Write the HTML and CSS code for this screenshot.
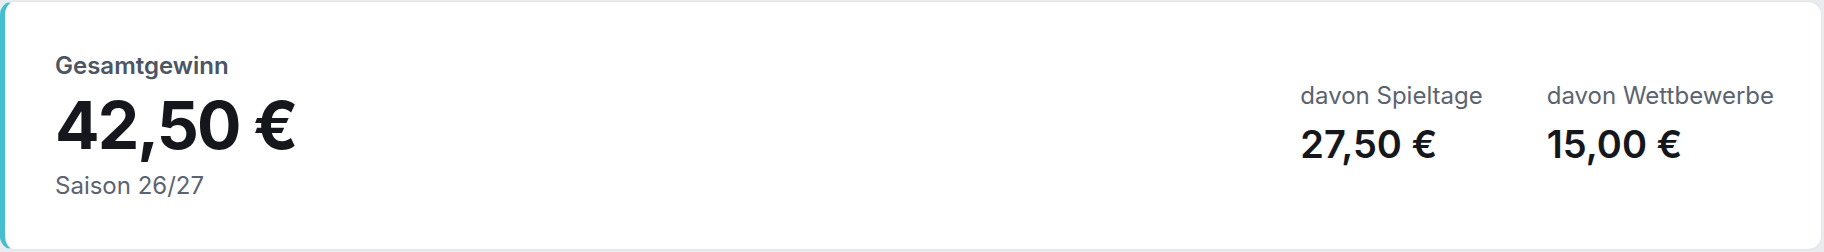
FILE: index.html
```html
<!DOCTYPE html>
<html lang="de">
<head>
    <meta charset="UTF-8">
    <meta name="viewport" content="width=device-width, initial-scale=1.0">
    <title>Gesamtgewinn</title>
    <link rel="stylesheet" href="styles.css">
</head>
<body>
    <div class="card">
        <div class="total">
            <div class="total-label">Gesamtgewinn</div>
            <div class="total-value">42,50 €</div>
            <div class="total-season">Saison 26/27</div>
        </div>
        <div class="breakdown">
            <div class="part">
                <div class="part-label">davon Spieltage</div>
                <div class="part-value">27,50 €</div>
            </div>
            <div class="part">
                <div class="part-label">davon Wettbewerbe</div>
                <div class="part-value">15,00 €</div>
            </div>
        </div>
    </div>
</body>
</html>
```

FILE: styles.css
```css
html,
body {
    margin: 0;
    padding: 0;
    height: 100%;
    background-color: #e9ebee;
    font-family: "Inter", "Liberation Sans", sans-serif;
}

body {
    padding: 1px 2px 2px 0;
    box-sizing: border-box;
}

.card {
    box-sizing: border-box;
    height: 249px;
    display: flex;
    align-items: center;
    justify-content: space-between;
    background-color: #fff;
    border: 1px solid #e2e5e9;
    border-left: 5px solid #45bfcf;
    border-radius: 14px;
    padding: 0 47px 0 50px;
}

.total-label {
    font-size: 24px;
    font-weight: 600;
    color: #4b5563;
    line-height: 32px;
}

.total-value {
    font-size: 66px;
    font-weight: 700;
    letter-spacing: -2px;
    color: #15171c;
    line-height: 72px;
    margin-top: 7px;
}

.total-season {
    font-size: 24px;
    color: #5b6370;
    line-height: 32px;
    margin-top: 9px;
}

.breakdown {
    display: flex;
    gap: 64px;
    margin-bottom: 6px;
}

.part-label {
    font-size: 24px;
    color: #5b6370;
    line-height: 32px;
}

.part-value {
    font-size: 38px;
    font-weight: 600;
    color: #15171c;
    line-height: 44px;
    margin-top: 10px;
}
```
